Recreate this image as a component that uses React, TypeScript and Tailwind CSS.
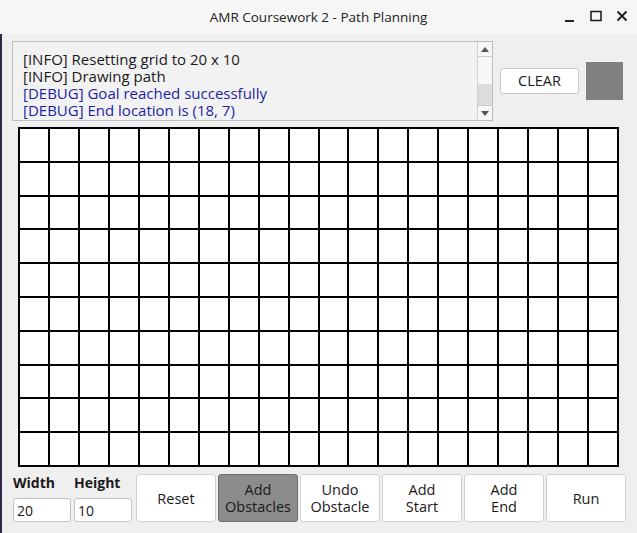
import React from "react";

const logLines = [
  { text: "[INFO] Resetting grid to 20 x 10", debug: false },
  { text: "[INFO] Drawing path", debug: false },
  { text: "[DEBUG] Goal reached successfully", debug: true },
  { text: "[DEBUG] End location is (18, 7)", debug: true },
];

const buttons = [
  { label: ["Reset"], pressed: false },
  { label: ["Add", "Obstacles"], pressed: true },
  { label: ["Undo", "Obstacle"], pressed: false },
  { label: ["Add", "Start"], pressed: false },
  { label: ["Add", "End"], pressed: false },
  { label: ["Run"], pressed: false },
];

export default function App() {
  const cells = Array.from({ length: 200 }, (_, i) => i);

  return (
    <div className="w-[637px] h-[533px] flex flex-col bg-[#efefef] font-['Open_Sans',sans-serif] text-[#1a1a1a] overflow-hidden">
      {/* title bar */}
      <div className="h-[34px] bg-[#f6f6f6] flex items-center relative">
        <div className="flex-1 text-center text-[13.5px] text-[#222]">
          AMR Coursework 2 - Path Planning
        </div>
        <div className="absolute right-[8px] top-[9px] flex items-center gap-[12px]">
          <svg width="14" height="14" viewBox="0 0 14 14">
            <rect x="2" y="11" width="9" height="2" fill="#222" />
          </svg>
          <svg width="14" height="14" viewBox="0 0 14 14">
            <rect x="2" y="2.5" width="10" height="9" fill="none" stroke="#222" strokeWidth="1.6" />
          </svg>
          <svg width="14" height="14" viewBox="0 0 14 14">
            <path d="M2.5 2.5 L11.5 11.5 M11.5 2.5 L2.5 11.5" stroke="#222" strokeWidth="2" />
          </svg>
        </div>
      </div>

      {/* body */}
      <div className="flex-1 flex flex-col border-l-[2px] border-[#2d2848]">
        {/* log + clear */}
        <div className="flex items-center mt-[7px] ml-[10px]">
          <div className="w-[481px] h-[80px] border border-[#bdbdbd] bg-[#f2f2f2] flex">
            <div className="flex-1 pl-[10px] pt-[9px] text-[15px] leading-[17px]">
              {logLines.map((l) => (
                <div key={l.text} className={l.debug ? "text-[#1e1ea6]" : "text-[#1a1a1a]"}>
                  {l.text}
                </div>
              ))}
            </div>
            <div className="w-[15px] border-l border-[#d0d0d0] flex flex-col bg-[#f7f7f7]">
              <div className="h-[15px] border-b border-[#cfcfcf] flex items-center justify-center">
                <svg width="8" height="5" viewBox="0 0 8 5">
                  <path d="M0 5 L4 0 L8 5 Z" fill="#555" />
                </svg>
              </div>
              <div className="flex-1 flex flex-col">
                <div className="flex-[4]" />
                <div className="flex-[3] bg-[#dcdcdc]" />
              </div>
              <div className="h-[15px] border-t border-[#cfcfcf] flex items-center justify-center">
                <svg width="8" height="5" viewBox="0 0 8 5">
                  <path d="M0 0 L4 5 L8 0 Z" fill="#555" />
                </svg>
              </div>
            </div>
          </div>
          <button className="ml-[7px] w-[79px] h-[26px] bg-white border border-[#c9c9c9] rounded-[3px] text-[14.5px] text-[#1a1a1a] flex items-center justify-center">
            CLEAR
          </button>
          <div className="ml-[7px] w-[37px] h-[38px] bg-[#808080]" />
        </div>

        {/* grid */}
        <div className="ml-[16px] mt-[6px] w-[601px] h-[340px] bg-black p-[2px] grid grid-cols-[repeat(20,1fr)] grid-rows-[repeat(10,1fr)] gap-[2px]">
          {cells.map((i) => (
            <div key={i} className="bg-white" />
          ))}
        </div>

        {/* controls */}
        <div className="flex mt-[7px] ml-[11px] items-stretch">
          <div className="flex flex-col w-[61px]">
            <div className="text-[14px] font-bold h-[18px] leading-[18px]">Width</div>
            <input
              readOnly
              value="20"
              className="mt-[6px] w-[58px] h-[24px] bg-white border border-[#c4c4c4] rounded-[3px] px-[3px] text-[14px] outline-none"
            />
          </div>
          <div className="flex flex-col w-[62px]">
            <div className="text-[14px] font-bold h-[18px] leading-[18px]">Height</div>
            <input
              readOnly
              value="10"
              className="mt-[6px] w-[58px] h-[24px] bg-white border border-[#c4c4c4] rounded-[3px] px-[3px] text-[14px] outline-none"
            />
          </div>
          <div className="flex gap-[2px]">
            {buttons.map((b) => (
              <button
                key={b.label.join(" ")}
                className={
                  b.pressed
                    ? "w-[80px] h-[48px] bg-[#8c8c8c] border border-[#6e6e6e] rounded-[3px] text-[14.5px] leading-[17px] text-[#1a1a1a] flex flex-col items-center justify-center"
                    : "w-[80px] h-[48px] bg-white border border-[#d2d2d2] rounded-[3px] text-[14.5px] leading-[17px] text-[#1a1a1a] flex flex-col items-center justify-center"
                }
              >
                {b.label.map((t) => (
                  <span key={t}>{t}</span>
                ))}
              </button>
            ))}
          </div>
        </div>
      </div>
    </div>
  );
}
